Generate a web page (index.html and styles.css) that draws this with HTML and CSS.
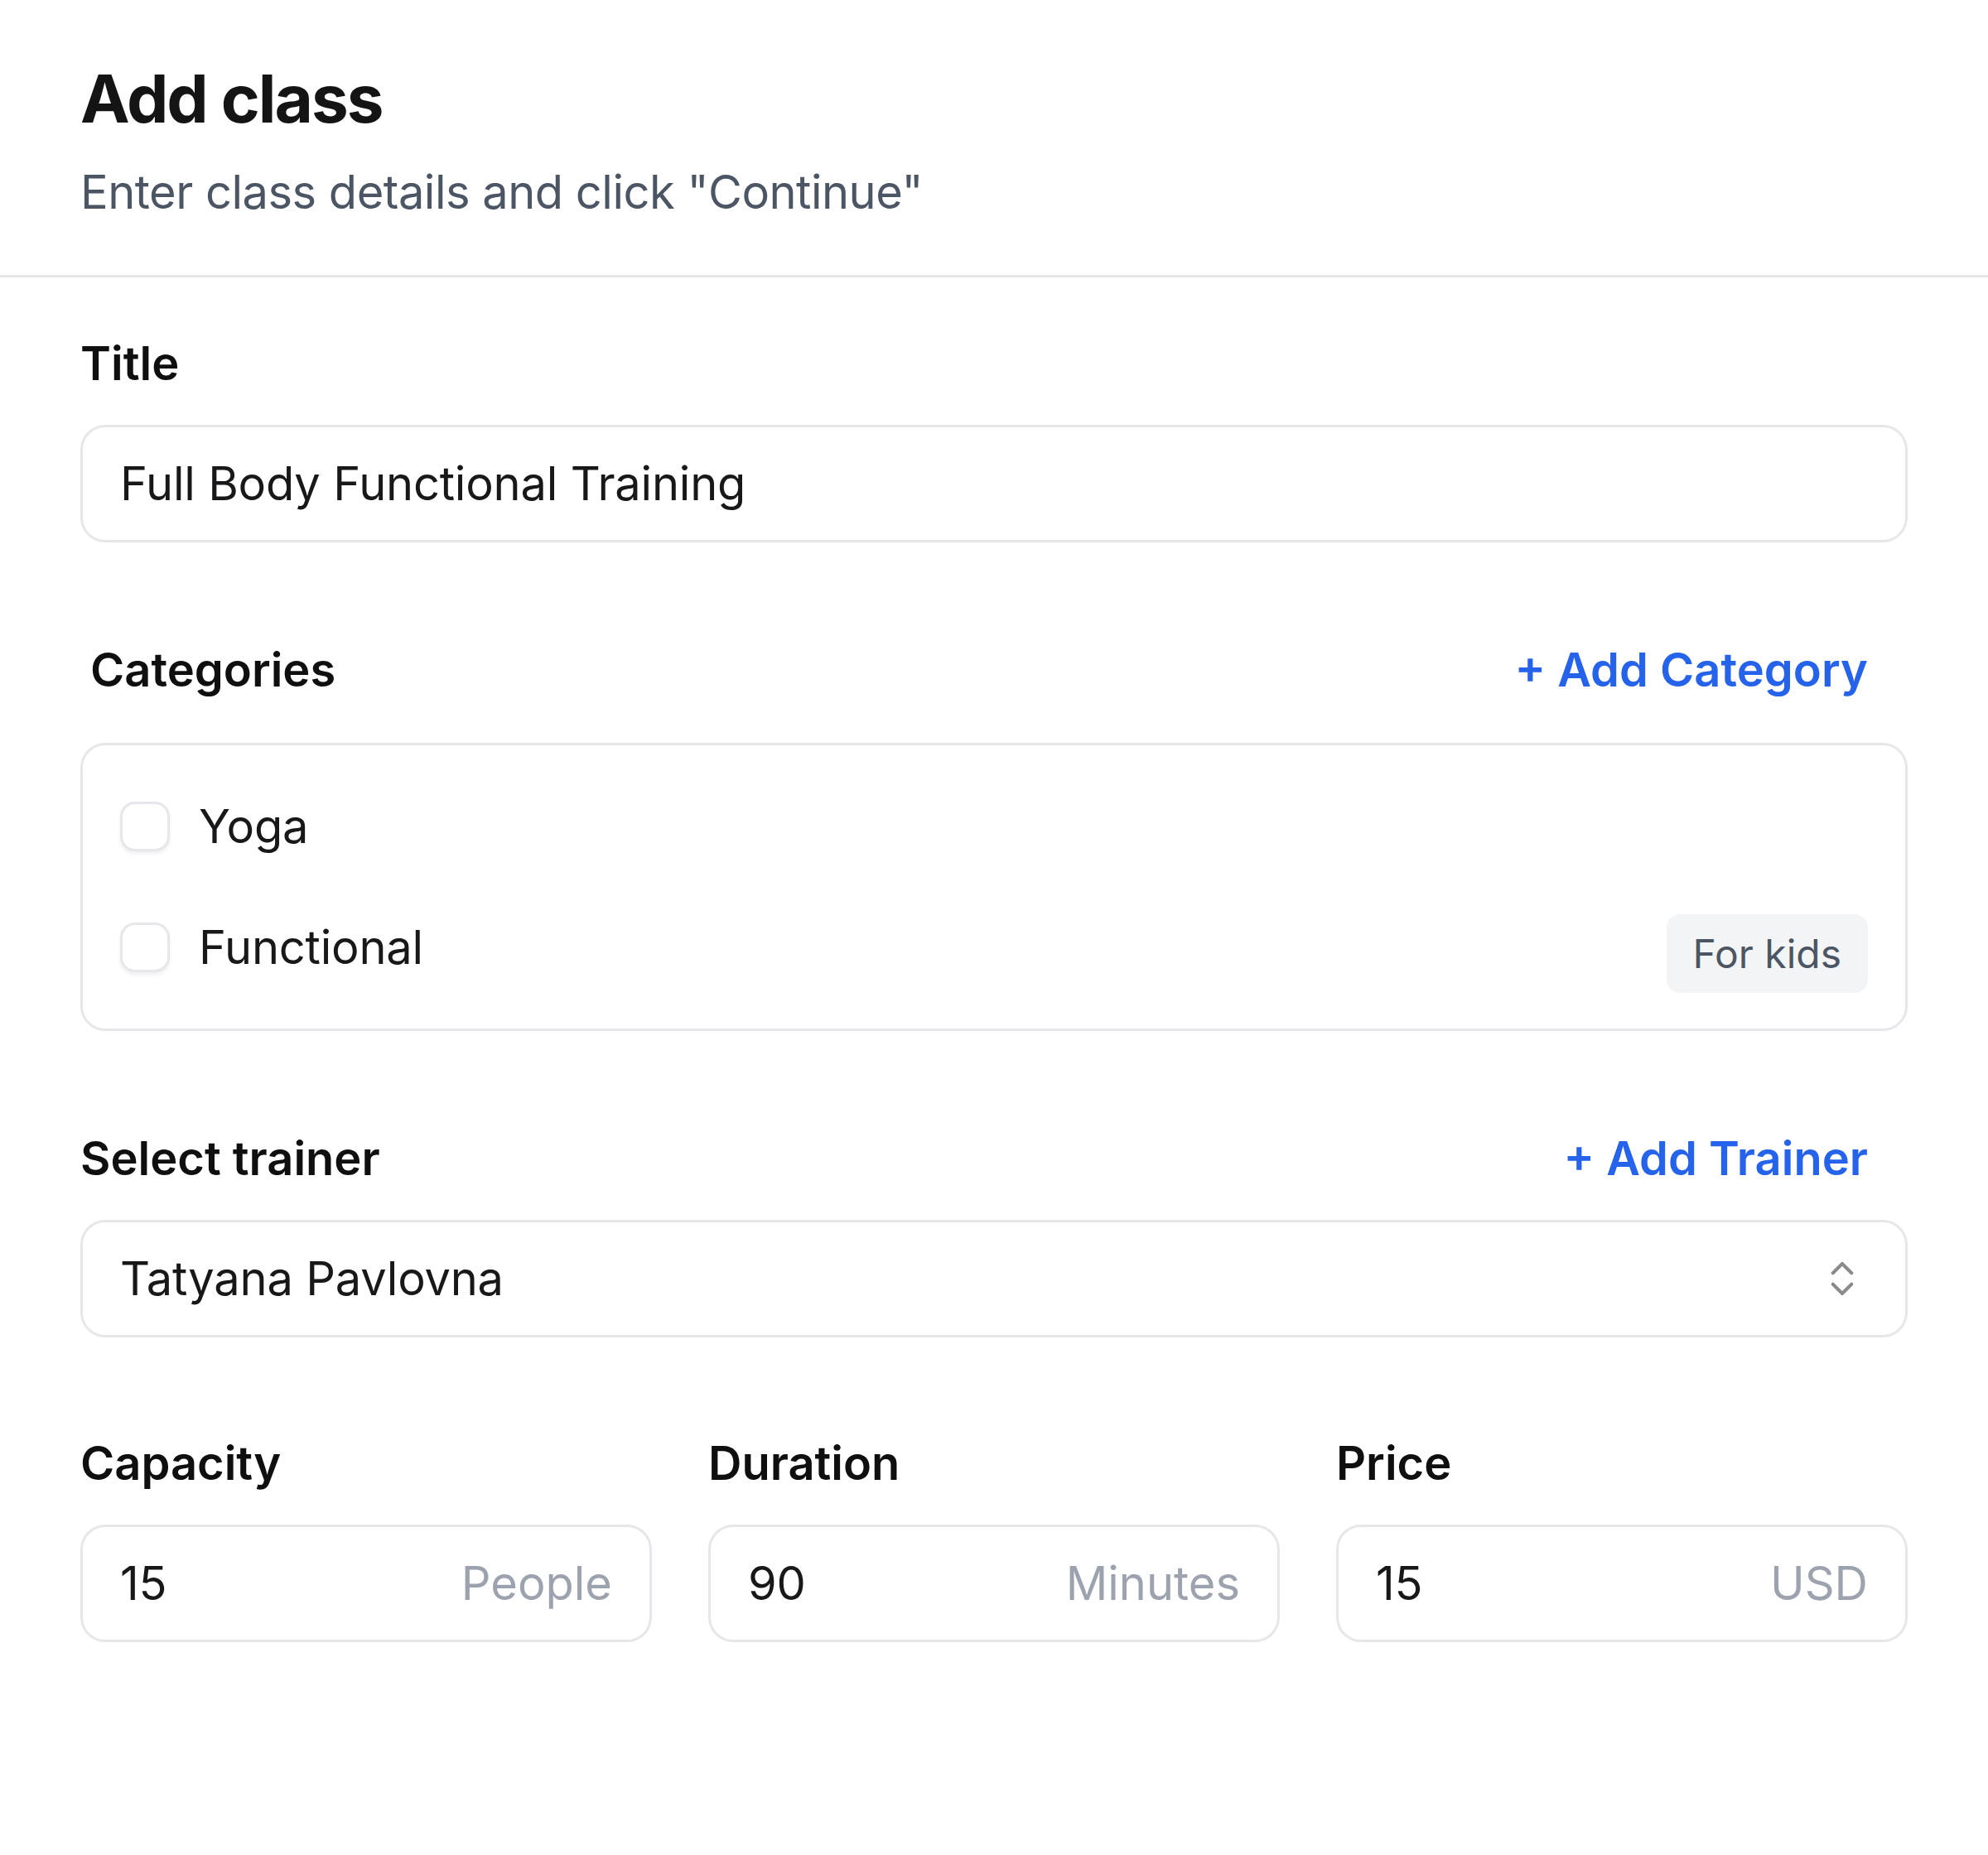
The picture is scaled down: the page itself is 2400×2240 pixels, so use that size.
FILE: index.html
```html
<!DOCTYPE html>
<html lang="en">

<head>
  <meta charset="UTF-8">
  <meta name="viewport" content="width=device-width, initial-scale=1.0">
  <title>Add class</title>
  <link rel="stylesheet" href="styles.css">
</head>

<body>
  <div class="header">
    <h1>Add class</h1>
    <p>Enter class details and click "Continue"</p>
  </div>

  <form class="form" id="class-form">
    <div class="field">
      <div class="field-head">
        <label class="label" for="title">Title</label>
      </div>
      <div class="input-box">
        <input type="text" id="title" value="Full Body Functional Training">
      </div>
    </div>

    <div class="field">
      <div class="field-head with-link categories-head">
        <span class="label">Categories</span>
        <a href="#" class="add-link">+ Add Category</a>
      </div>
      <div class="categories">
        <div class="cat-row">
          <label class="option">
            <input type="checkbox" class="checkbox">
            <span>Yoga</span>
          </label>
        </div>
        <div class="cat-row">
          <label class="option">
            <input type="checkbox" class="checkbox">
            <span>Functional</span>
          </label>
          <span class="badge">For kids</span>
        </div>
      </div>
    </div>

    <div class="field">
      <div class="field-head with-link">
        <span class="label">Select trainer</span>
        <a href="#" class="add-link">+ Add Trainer</a>
      </div>
      <div class="input-box select">
        <span class="select-value">Tatyana Pavlovna</span>
        <svg class="chevrons" width="54" height="54" viewBox="0 0 24 24" fill="none" stroke="#8a8a8e" stroke-width="1.8" stroke-linecap="round" stroke-linejoin="round">
          <path d="m7 15 5 5 5-5" />
          <path d="m7 9 5-5 5 5" />
        </svg>
      </div>
    </div>

    <div class="numbers">
      <div class="field">
        <div class="field-head">
          <label class="label" for="capacity">Capacity</label>
        </div>
        <div class="input-box">
          <input type="text" id="capacity" value="15">
          <span class="unit">People</span>
        </div>
      </div>
      <div class="field">
        <div class="field-head">
          <label class="label" for="duration">Duration</label>
        </div>
        <div class="input-box">
          <input type="text" id="duration" value="90">
          <span class="unit">Minutes</span>
        </div>
      </div>
      <div class="field">
        <div class="field-head">
          <label class="label" for="price">Price</label>
        </div>
        <div class="input-box">
          <input type="text" id="price" value="15">
          <span class="unit">USD</span>
        </div>
      </div>
    </div>
  </form>
</body>

</html>
```

FILE: styles.css
```css
body {
  margin: 0;
  font-family: Inter, "Noto Sans", sans-serif;
  color: #111111;
  background-color: #fff;
}

.header {
  padding: 71px 97px 66px;
  border-bottom: 3px solid #e5e7eb;
}

.header h1 {
  margin: 0;
  font-size: 80px;
  line-height: 96px;
  font-weight: 700;
  letter-spacing: -2px;
  color: #141414;
}

.header p {
  margin: 31px 0 0;
  font-size: 56px;
  line-height: 68px;
  letter-spacing: -0.5px;
  color: #4b5563;
}

.form {
  display: flex;
  flex-direction: column;
  gap: 120px;
  padding: 70px 97px;
}

.field {
  min-width: 0;
}

.field-head {
  display: flex;
  justify-content: space-between;
  align-items: center;
  margin-bottom: 40px;
}

.field-head.with-link {
  padding-right: 48px;
}

.categories-head {
  padding-left: 12px;
  margin-bottom: 54px !important;
}

.label {
  font-size: 56px;
  line-height: 68px;
  font-weight: 600;
  color: #0f0f0f;
}

.add-link {
  font-size: 56px;
  line-height: 68px;
  font-weight: 600;
  color: #2563eb;
  text-decoration: none;
}

.input-box {
  display: flex;
  align-items: center;
  height: 142px;
  box-sizing: border-box;
  padding: 0 45px;
  border: 3px solid #e5e7eb;
  border-radius: 30px;
  background-color: #fff;
}

.input-box input {
  flex: 1;
  width: 0;
  min-width: 0;
  padding: 0;
  border: none;
  outline: none;
  background: transparent;
  font-family: inherit;
  font-size: 56px;
  letter-spacing: -0.2px;
  color: #18181b;
}

.unit {
  font-size: 56px;
  color: #9ca3af;
}

.select {
  justify-content: space-between;
  padding-right: 49px;
}

.select-value {
  font-size: 56px;
  letter-spacing: -0.2px;
  color: #18181b;
}

.chevrons {
  display: block;
}

.categories {
  display: flex;
  flex-direction: column;
  gap: 43px;
  padding: 50px 45px 43px;
  border: 3px solid #e5e7eb;
  border-radius: 30px;
}

.cat-row {
  display: flex;
  align-items: center;
  justify-content: space-between;
  min-height: 95px;
}

.option {
  display: flex;
  align-items: center;
  gap: 35px;
  font-size: 56px;
  line-height: 68px;
  letter-spacing: -0.2px;
  color: #18181b;
}

.checkbox {
  appearance: none;
  width: 60px;
  height: 60px;
  margin: 0;
  box-sizing: border-box;
  border: 3px solid #e5e7eb;
  border-radius: 18px;
  background-color: #fff;
  box-shadow: 0 3px 5px rgba(0, 0, 0, 0.07);
}

.badge {
  margin-top: 16px;
  padding: 14px 32px;
  border-radius: 16px;
  background-color: #f3f4f6;
  font-size: 48px;
  line-height: 67px;
  color: #4b5563;
}

.numbers {
  display: grid;
  grid-template-columns: repeat(3, minmax(0, 1fr));
  gap: 68px;
  margin-top: -2px;
}
```
